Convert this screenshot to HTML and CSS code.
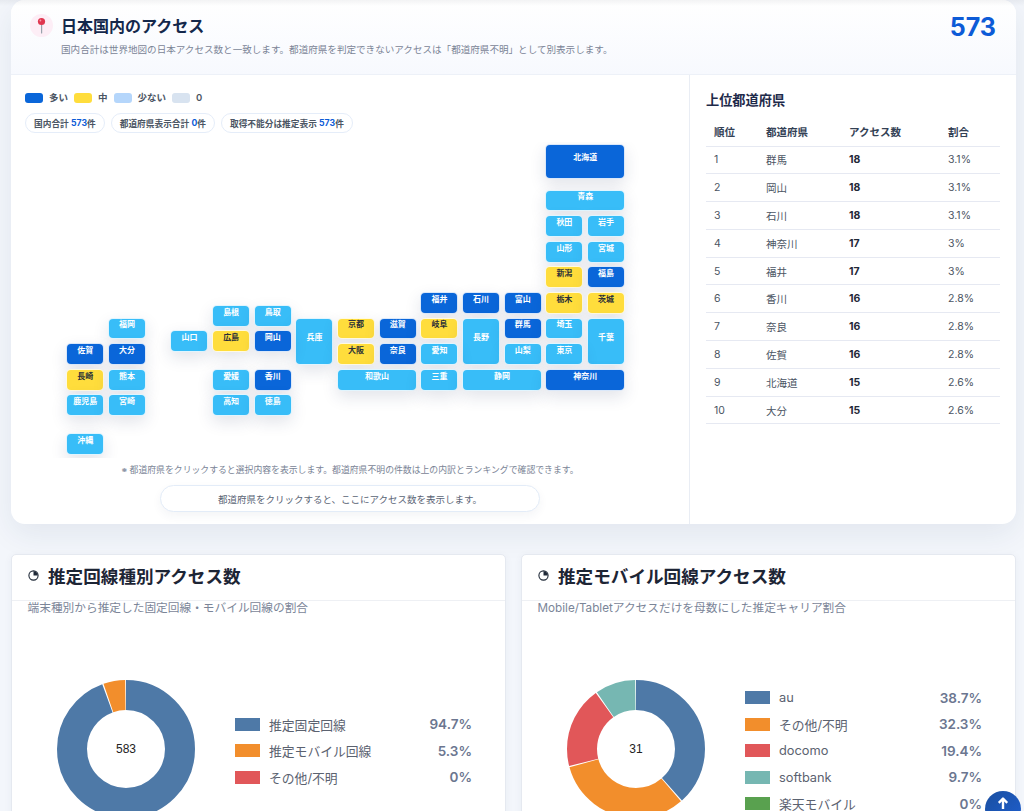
FILE: index.html
```html
<!DOCTYPE html>
<html lang="ja">
<head>
    <meta charset="UTF-8">
    <meta name="viewport" content="width=device-width, initial-scale=1.0">
    <title>アクセス解析</title>
    <link rel="stylesheet" href="styles.css">
</head>
<body>
    <div class="top-shade"></div>
    <div class="page">
        <section class="japan-card">
            <div class="japan-header">
                <div class="japan-heading">
                    <span class="pin-icon">
                        <svg width="11" height="17" viewBox="0 0 11 17">
                            <rect x="5" y="7" width="1.2" height="9.5" rx="0.6" fill="#9aa3ad"/>
                            <circle cx="5.5" cy="4.5" r="3.6" fill="#e0364f"/>
                            <circle cx="4.4" cy="3.5" r="0.9" fill="#f59aa8"/>
                        </svg>
                    </span>
                    <div>
                        <h2>日本国内のアクセス</h2>
                        <p>国内合計は世界地図の日本アクセス数と一致します。都道府県を判定できないアクセスは「都道府県不明」として別表示します。</p>
                    </div>
                </div>
                <div class="japan-total">573</div>
            </div>

            <div class="japan-body">
                <div class="map-panel">
                    <div class="map-legend">
                        <span class="swatch high"></span><span>多い</span>
                        <span class="swatch mid"></span><span>中</span>
                        <span class="swatch low"></span><span>少ない</span>
                        <span class="swatch none"></span><span>0</span>
                    </div>
                    <div class="chips">
                        <span class="chip">国内合計 <b>573</b>件</span>
                        <span class="chip">都道府県表示合計 <b>0</b>件</span>
                        <span class="chip">取得不能分は推定表示 <b>573</b>件</span>
                    </div>

                    <div class="map-clip">
                        <div class="tile-map">
                            <div class="tile high hokkaido">北海道</div>
                            <div class="tile low aomori">青森</div>
                            <div class="tile low akita">秋田</div>
                            <div class="tile low iwate">岩手</div>
                            <div class="tile low yamagata">山形</div>
                            <div class="tile low miyagi">宮城</div>
                            <div class="tile mid niigata">新潟</div>
                            <div class="tile high fukushima">福島</div>
                            <div class="tile high fukui">福井</div>
                            <div class="tile high ishikawa">石川</div>
                            <div class="tile high toyama">富山</div>
                            <div class="tile mid tochigi">栃木</div>
                            <div class="tile mid ibaraki">茨城</div>
                            <div class="tile low fukuoka">福岡</div>
                            <div class="tile low shimane">島根</div>
                            <div class="tile low tottori">鳥取</div>
                            <div class="tile low hyogo">兵庫</div>
                            <div class="tile mid kyoto">京都</div>
                            <div class="tile high shiga">滋賀</div>
                            <div class="tile mid gifu">岐阜</div>
                            <div class="tile low nagano">長野</div>
                            <div class="tile high gunma">群馬</div>
                            <div class="tile low saitama">埼玉</div>
                            <div class="tile low chiba">千葉</div>
                            <div class="tile low yamaguchi">山口</div>
                            <div class="tile mid hiroshima">広島</div>
                            <div class="tile high okayama">岡山</div>
                            <div class="tile high saga">佐賀</div>
                            <div class="tile high oita">大分</div>
                            <div class="tile mid osaka">大阪</div>
                            <div class="tile high nara">奈良</div>
                            <div class="tile low aichi">愛知</div>
                            <div class="tile low yamanashi">山梨</div>
                            <div class="tile low tokyo">東京</div>
                            <div class="tile mid nagasaki">長崎</div>
                            <div class="tile low kumamoto">熊本</div>
                            <div class="tile low ehime">愛媛</div>
                            <div class="tile high kagawa">香川</div>
                            <div class="tile low wakayama">和歌山</div>
                            <div class="tile low mie">三重</div>
                            <div class="tile low shizuoka">静岡</div>
                            <div class="tile high kanagawa">神奈川</div>
                            <div class="tile low kagoshima">鹿児島</div>
                            <div class="tile low miyazaki">宮崎</div>
                            <div class="tile low kochi">高知</div>
                            <div class="tile low tokushima">徳島</div>
                            <div class="tile low okinawa">沖縄</div>
                        </div>
                    </div>

                    <p class="map-note">※ 都道府県をクリックすると選択内容を表示します。都道府県不明の件数は上の内訳とランキングで確認できます。</p>
                    <div class="map-selection">都道府県をクリックすると、ここにアクセス数を表示します。</div>
                </div>

                <div class="rank-panel">
                    <h3>上位都道府県</h3>
                    <table class="rank-table">
                        <thead>
                            <tr><th>順位</th><th>都道府県</th><th>アクセス数</th><th>割合</th></tr>
                        </thead>
                        <tbody>
                            <tr><td>1</td><td>群馬</td><td><b>18</b></td><td>3.1%</td></tr>
                            <tr><td>2</td><td>岡山</td><td><b>18</b></td><td>3.1%</td></tr>
                            <tr><td>3</td><td>石川</td><td><b>18</b></td><td>3.1%</td></tr>
                            <tr><td>4</td><td>神奈川</td><td><b>17</b></td><td>3%</td></tr>
                            <tr><td>5</td><td>福井</td><td><b>17</b></td><td>3%</td></tr>
                            <tr><td>6</td><td>香川</td><td><b>16</b></td><td>2.8%</td></tr>
                            <tr><td>7</td><td>奈良</td><td><b>16</b></td><td>2.8%</td></tr>
                            <tr><td>8</td><td>佐賀</td><td><b>16</b></td><td>2.8%</td></tr>
                            <tr><td>9</td><td>北海道</td><td><b>15</b></td><td>2.6%</td></tr>
                            <tr><td>10</td><td>大分</td><td><b>15</b></td><td>2.6%</td></tr>
                        </tbody>
                    </table>
                </div>
            </div>
        </section>

        <div class="chart-row">
            <section class="chart-card">
                <div class="chart-title">
                    <svg class="pie-icon" width="11" height="11" viewBox="0 0 11 11">
                        <circle cx="5.5" cy="5.5" r="4.6" fill="none" stroke="#1f2937" stroke-width="1.1"/>
                        <path d="M5.5 5.5V1.2A4.3 4.3 0 0 1 9.8 5.5Z" fill="#1f2937"/>
                    </svg>
                    <h3>推定回線種別アクセス数</h3>
                </div>
                <p class="chart-sub">端末種別から推定した固定回線・モバイル回線の割合</p>
                <div class="chart-body">
                    <div class="donut">
                        <svg width="138" height="138" viewBox="0 0 138 138">
                            <g fill="none" stroke-width="30" transform="rotate(-90 69 69)">
                                <circle cx="69" cy="69" r="54" pathLength="100" stroke="#4e79a7" stroke-dasharray="94.4 5.6"/>
                                <circle cx="69" cy="69" r="54" pathLength="100" stroke="#f28e2c" stroke-dasharray="5.1 94.9" stroke-dashoffset="-94.7"/>
                            </g>
                        </svg>
                        <span class="donut-total">583</span>
                    </div>
                    <ul class="chart-legend">
                        <li><span class="key c-blue"></span><span class="name">推定固定回線</span><span class="pct">94.7%</span></li>
                        <li><span class="key c-orange"></span><span class="name">推定モバイル回線</span><span class="pct">5.3%</span></li>
                        <li><span class="key c-red"></span><span class="name">その他/不明</span><span class="pct">0%</span></li>
                    </ul>
                </div>
            </section>

            <section class="chart-card">
                <div class="chart-title">
                    <svg class="pie-icon" width="11" height="11" viewBox="0 0 11 11">
                        <circle cx="5.5" cy="5.5" r="4.6" fill="none" stroke="#1f2937" stroke-width="1.1"/>
                        <path d="M5.5 5.5V1.2A4.3 4.3 0 0 1 9.8 5.5Z" fill="#1f2937"/>
                    </svg>
                    <h3>推定モバイル回線アクセス数</h3>
                </div>
                <p class="chart-sub">Mobile/Tabletアクセスだけを母数にした推定キャリア割合</p>
                <div class="chart-body">
                    <div class="donut">
                        <svg width="138" height="138" viewBox="0 0 138 138">
                            <g fill="none" stroke-width="30" transform="rotate(-90 69 69)">
                                <circle cx="69" cy="69" r="54" pathLength="100" stroke="#4e79a7" stroke-dasharray="38.4 61.6"/>
                                <circle cx="69" cy="69" r="54" pathLength="100" stroke="#f28e2c" stroke-dasharray="32 68" stroke-dashoffset="-38.7"/>
                                <circle cx="69" cy="69" r="54" pathLength="100" stroke="#e15759" stroke-dasharray="19.1 80.9" stroke-dashoffset="-71"/>
                                <circle cx="69" cy="69" r="54" pathLength="100" stroke="#76b7b2" stroke-dasharray="9.4 90.6" stroke-dashoffset="-90.4"/>
                            </g>
                        </svg>
                        <span class="donut-total">31</span>
                    </div>
                    <ul class="chart-legend">
                        <li><span class="key c-blue"></span><span class="name">au</span><span class="pct">38.7%</span></li>
                        <li><span class="key c-orange"></span><span class="name">その他/不明</span><span class="pct">32.3%</span></li>
                        <li><span class="key c-red"></span><span class="name">docomo</span><span class="pct">19.4%</span></li>
                        <li><span class="key c-teal"></span><span class="name">softbank</span><span class="pct">9.7%</span></li>
                        <li><span class="key c-green"></span><span class="name">楽天モバイル</span><span class="pct">0%</span></li>
                    </ul>
                </div>
            </section>
        </div>
    </div>

    <button class="to-top" aria-label="ページ上部へ">
        <svg width="12" height="13" viewBox="0 0 12 13">
            <path d="M6 1.5V12M1.8 5.8 6 1.5l4.2 4.3" fill="none" stroke="#fff" stroke-width="2.4" stroke-linejoin="round"/>
        </svg>
    </button>
</body>
</html>
```
FILE: styles.css
```css
* {
    margin: 0;
    padding: 0;
    box-sizing: border-box;
}
html, body {
    height: 100vh;
    overflow: hidden;
}
body {
    font-family: Inter, "Noto Sans CJK JP", sans-serif;
    background: #f3f6fb;
    color: #1f2937;
}
.top-shade {
    position: absolute;
    top: 0;
    left: 0;
    right: 0;
    height: 6px;
    background: linear-gradient(rgba(15,23,42,0.05), rgba(15,23,42,0));
    z-index: 2;
}
.page {
    padding: 0 8px 0 11px;
}

/* japan card */
.japan-card {
    background: white;
    border-radius: 14px;
    box-shadow: 0 10px 30px rgba(30,50,90,0.08);
}
.japan-header {
    height: 75px;
    padding: 14px 20px 0 19px;
    display: flex;
    justify-content: space-between;
    background: linear-gradient(#ffffff, #f7f9fe);
    border-bottom: 1px solid #edf1f8;
    border-radius: 14px 14px 0 0;
}
.japan-heading {
    display: flex;
    gap: 8px;
}
.pin-icon {
    width: 23px;
    height: 23px;
    border-radius: 50%;
    background: #fdeef6;
    display: flex;
    align-items: center;
    justify-content: center;
}
.japan-heading h2 {
    font-size: 16px;
    line-height: 24px;
    font-weight: 700;
    color: #14284b;
}
.japan-heading p {
    margin-top: 5px;
    font-size: 9.57px;
    line-height: 13px;
    color: #7a8496;
}
.japan-total {
    font-size: 25px;
    line-height: 26px;
    font-weight: 700;
    color: #0d5bd7;
}
.japan-body {
    display: grid;
    grid-template-columns: 678px 1fr;
    height: 449px;
}

/* map */
.map-panel {
    padding: 17px 14px 0 14px;
}
.map-legend {
    display: flex;
    align-items: center;
    font-size: 9.5px;
    line-height: 12px;
    font-weight: 600;
    color: #4b5563;
}
.swatch {
    width: 18px;
    height: 10px;
    border-radius: 3px;
    margin-right: 6px;
}
.swatch:not(:first-child) {
    margin-left: 6px;
}
.swatch.high { background: #0a66d9; }
.swatch.mid { background: #ffdd3c; }
.swatch.low { background: #b5d6fb; }
.swatch.none { background: #d8e3f0; }
.chips {
    display: flex;
    gap: 6px;
    margin-top: 9px;
}
.chip {
    height: 20px;
    padding: 0 8px;
    display: flex;
    align-items: center;
    white-space: pre;
    font-size: 8.7px;
    font-weight: 600;
    color: #4b5563;
    border: 1px solid #e5edf9;
    border-radius: 10px;
}
.chip b {
    color: #0d5bd7;
    font-weight: 700;
}
.map-clip {
    margin-top: 9px;
    overflow: hidden;
    padding: 0 30px 0 39.5px;
    height: 316px;
}
.tile-map {
    display: grid;
    grid-template-columns: repeat(27, 20.83px);
    grid-template-rows: 45.7px repeat(21, 12.8px);
}
.tile {
    margin: 1.85px;
    display: flex;
    align-items: center;
    justify-content: center;
    padding-bottom: 9px;
    font-size: 8px;
    font-weight: 700;
    color: white;
    border: 1px solid rgba(255,255,255,0.85);
    border-radius: 5px;
    box-shadow: 0 6px 16px rgba(30,50,90,0.13);
}
.tile.high { background: #0a66d9; }
.tile.mid { background: #ffdd3c; color: #2a2f38; }
.tile.low { background: #38bdf8; }

.hokkaido { grid-area: 1 / 24 / 2 / 28; height: 35px; }
.aomori { grid-area: 2 / 24 / 4 / 28; }
.akita { grid-area: 4 / 24 / 6 / 26; }
.iwate { grid-area: 4 / 26 / 6 / 28; }
.yamagata { grid-area: 6 / 24 / 8 / 26; }
.miyagi { grid-area: 6 / 26 / 8 / 28; }
.niigata { grid-area: 8 / 24 / 10 / 26; }
.fukushima { grid-area: 8 / 26 / 10 / 28; }
.fukui { grid-area: 10 / 18 / 12 / 20; }
.ishikawa { grid-area: 10 / 20 / 12 / 22; }
.toyama { grid-area: 10 / 22 / 12 / 24; }
.tochigi { grid-area: 10 / 24 / 12 / 26; }
.ibaraki { grid-area: 10 / 26 / 12 / 28; }
.fukuoka { grid-area: 12 / 3 / 14 / 5; }
.shimane { grid-area: 11 / 8 / 13 / 10; }
.tottori { grid-area: 11 / 10 / 13 / 12; }
.hyogo { grid-area: 12 / 12 / 16 / 14; }
.kyoto { grid-area: 12 / 14 / 14 / 16; }
.shiga { grid-area: 12 / 16 / 14 / 18; }
.gifu { grid-area: 12 / 18 / 14 / 20; }
.nagano { grid-area: 12 / 20 / 16 / 22; }
.gunma { grid-area: 12 / 22 / 14 / 24; }
.saitama { grid-area: 12 / 24 / 14 / 26; }
.chiba { grid-area: 12 / 26 / 16 / 28; }
.yamaguchi { grid-area: 13 / 6 / 15 / 8; }
.hiroshima { grid-area: 13 / 8 / 15 / 10; }
.okayama { grid-area: 13 / 10 / 15 / 12; }
.saga { grid-area: 14 / 1 / 16 / 3; }
.oita { grid-area: 14 / 3 / 16 / 5; }
.osaka { grid-area: 14 / 14 / 16 / 16; }
.nara { grid-area: 14 / 16 / 16 / 18; }
.aichi { grid-area: 14 / 18 / 16 / 20; }
.yamanashi { grid-area: 14 / 22 / 16 / 24; }
.tokyo { grid-area: 14 / 24 / 16 / 26; }
.nagasaki { grid-area: 16 / 1 / 18 / 3; }
.kumamoto { grid-area: 16 / 3 / 18 / 5; }
.ehime { grid-area: 16 / 8 / 18 / 10; }
.kagawa { grid-area: 16 / 10 / 18 / 12; }
.wakayama { grid-area: 16 / 14 / 18 / 18; }
.mie { grid-area: 16 / 18 / 18 / 20; }
.shizuoka { grid-area: 16 / 20 / 18 / 24; }
.kanagawa { grid-area: 16 / 24 / 18 / 28; }
.kagoshima { grid-area: 18 / 1 / 20 / 3; }
.miyazaki { grid-area: 18 / 3 / 20 / 5; }
.kochi { grid-area: 18 / 8 / 20 / 10; }
.tokushima { grid-area: 18 / 10 / 20 / 12; }
.okinawa { grid-area: 21 / 1 / 23 / 3; }

.map-note {
    margin-top: 5px;
    text-align: center;
    font-size: 8.85px;
    line-height: 13px;
    color: #7a8496;
}
.map-selection {
    width: 380px;
    height: 27px;
    margin: 9px auto 0;
    display: flex;
    align-items: center;
    justify-content: center;
    font-size: 9.5px;
    color: #5a6475;
    background: white;
    border: 1px solid #e3ecf8;
    border-radius: 14px;
    box-shadow: 0 4px 10px rgba(30,50,90,0.05);
}

/* ranking */
.rank-panel {
    border-left: 1px solid #e9edf4;
    padding: 15px 16px 0 16px;
}
.rank-panel h3 {
    font-size: 13.2px;
    line-height: 20px;
    font-weight: 600;
    color: #1e2a4a;
}
.rank-table {
    width: 294px;
    margin-top: 8px;
    border-collapse: collapse;
    table-layout: fixed;
    font-size: 10.5px;
}
.rank-table th {
    height: 28px;
    text-align: left;
    font-weight: 600;
    color: #334155;
    border-bottom: 1px solid #e6e9f2;
}
.rank-table td {
    height: 27.8px;
    color: #4b5563;
    border-bottom: 1px solid #e6e9f2;
}
.rank-table td b {
    color: #1f2937;
    font-weight: 700;
}
.rank-table th:nth-child(1), .rank-table td:nth-child(1) { width: 60px; padding-left: 8px; }
.rank-table th:nth-child(2), .rank-table td:nth-child(2) { width: 83px; }
.rank-table th:nth-child(3), .rank-table td:nth-child(3) { width: 99px; }

/* charts */
.chart-row {
    display: grid;
    grid-template-columns: 495px 495px;
    gap: 15px;
    margin-top: 30px;
}
.chart-card {
    height: 330px;
    background: white;
    border: 1px solid #e5e9f0;
    border-radius: 5px;
    box-shadow: 0 2px 8px rgba(30,50,90,0.05);
}
.chart-title {
    height: 46px;
    padding: 0 0 4px 16px;
    display: flex;
    align-items: center;
    gap: 9px;
    border-bottom: 1px solid #eef0f4;
}
.chart-title h3 {
    font-size: 17.6px;
    font-weight: 700;
    color: #1d2535;
}
.chart-sub {
    padding-left: 15.5px;
    font-size: 11.7px;
    line-height: 14px;
    color: #7b8598;
}
.chart-body {
    height: 268px;
    padding: 0 33px 0 45px;
    display: flex;
    align-items: center;
    gap: 40px;
}
.donut {
    position: relative;
    width: 138px;
    height: 138px;
    flex-shrink: 0;
}
.donut svg {
    display: block;
}
.donut-total {
    position: absolute;
    inset: 0;
    display: flex;
    align-items: center;
    justify-content: center;
    font-family: "Liberation Sans", sans-serif;
    font-size: 12px;
    color: #222;
}
.chart-legend {
    flex: 1;
    list-style: none;
    margin-top: 3px;
}
.chart-legend li {
    height: 26.5px;
    display: flex;
    align-items: center;
}
.key {
    width: 25px;
    height: 13px;
    margin-right: 9px;
}
.c-blue { background: #4e79a7; }
.c-orange { background: #f28e2c; }
.c-red { background: #e15759; }
.c-teal { background: #76b7b2; }
.c-green { background: #59a14f; }
.name {
    flex: 1;
    font-size: 12.8px;
    color: #5b6270;
}
.pct {
    font-size: 13.5px;
    font-weight: 600;
    color: #6b7690;
}

.to-top {
    position: fixed;
    right: 3px;
    bottom: -16px;
    width: 36px;
    height: 36px;
    border: none;
    border-radius: 50%;
    background: linear-gradient(135deg, #1a4fa0, #1e5fd0);
    display: flex;
    padding-top: 6px;
    justify-content: center;
    z-index: 3;
}
```
